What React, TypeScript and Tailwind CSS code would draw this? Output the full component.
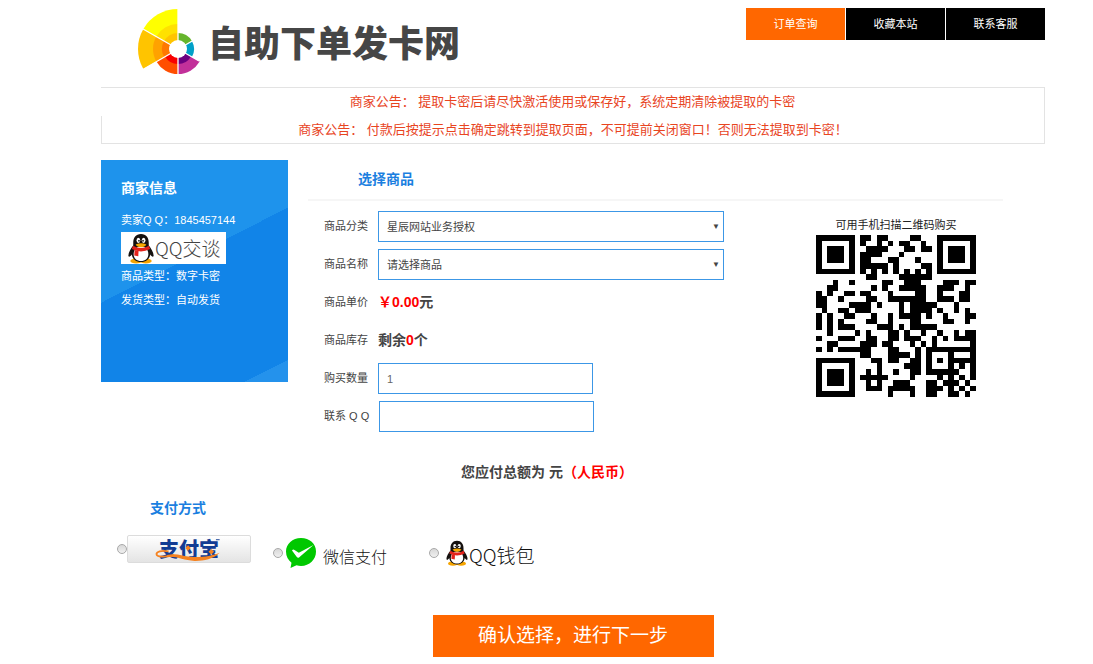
import { useState } from 'react';
import type { ReactNode } from 'react';

const NAV_ITEMS = [
  { label: '订单查询', active: true },
  { label: '收藏本站', active: false },
  { label: '联系客服', active: false },
];

const QR_ROWS = [
  '#######.##.##....##...#######',
  '#.....#.#..#.#.##..#..#.....#',
  '#.###.#..####...##.##.#.###.#',
  '#.###.#.####...#......#.###.#',
  '#.###.#.##...##...#...#.###.#',
  '#.....#.#####.#....##.#.....#',
  '#######.#.#.#.#.#.#.#.#######',
  '.........##....######........',
  '...#..#.....##..###....###.##',
  '..##......#.#..#####..###..#.',
  '#.#..##.##...#....##..#...##.',
  '##..#....##..#######..###.##.',
  '##....####.#...#.#####...#...',
  '.#..##.###.....#.####.#..#.#.',
  '#.#..##...#..#.####.#..#...##',
  '#.#.#....##..#...##....##..#.',
  '#.#.###....###.#.#####.......',
  '..#....#.#...##.#..#..#..#.##',
  '#...###..##..##.###..#.#.####',
  '..##....###.##...#.#.#......#',
  '#.#.######...##...#.#########',
  '........##...####.#.#...#...#',
  '#######...##.##..##.#.#.#####',
  '#.....#....#....###.#...#.#.#',
  '#.###.#..#.#..#..##.######..#',
  '#.###.#.#####....#....#.#.#.#',
  '#.###.#..#.#..###...##.###.#.',
  '#.....#..###.#####..###.#.#.#',
  '#######......#...#..##..##.#.',
];

function QrCode() {
  return (
    <svg
      viewBox="0 0 29 29"
      preserveAspectRatio="none"
      shapeRendering="crispEdges"
      className="h-[162px] w-40"
      role="img"
      aria-label="二维码"
    >
      {QR_ROWS.map((row, y) =>
        row.split('').map((c, x) =>
          c === '#' ? <rect key={`${x}-${y}`} x={x} y={y} width="1" height="1" /> : null,
        ),
      )}
    </svg>
  );
}

/** 从圆心出发的扇形，角度以正上方为 0，顺时针 */
function wedge(r: number, from: number, to: number) {
  const point = (deg: number) => {
    const a = ((deg - 90) * Math.PI) / 180;
    return `${(41 + r * Math.cos(a)).toFixed(2)} ${(41 + r * Math.sin(a)).toFixed(2)}`;
  };
  return `M41 41 L${point(from)} A${r} ${r} 0 0 1 ${point(to)} Z`;
}

const WEDGES: [number, number, number, string][] = [
  [40, 300, 360, '#ffff00'],
  [25, 300, 360, '#ffe100'],
  [16, 300, 360, '#ffc400'],
  [40, 240, 300, '#ffc400'],
  [25, 240, 300, '#ffa200'],
  [16, 240, 300, '#ff7800'],
  [25, 180, 240, '#ff4e00'],
  [15, 180, 240, '#f80000'],
  [25, 120, 180, '#c2309a'],
  [15, 120, 180, '#6c0080'],
  [16, 60, 120, '#00a0c8'],
  [16, 0, 60, '#66b52c'],
];

function Logo() {
  return (
    <svg viewBox="0 0 64 67" className="h-[67px] w-16" aria-hidden="true">
      {WEDGES.map(([r, from, to, fill]) => (
        <path key={`${r}-${from}`} d={wedge(r, from, to)} fill={fill} />
      ))}
      <path
        d="M41 0V67 M6 21L62 53 M5 62L57 32"
        stroke="#fff"
        strokeWidth="1.3"
        fill="none"
      />
      <circle cx="41" cy="41" r="9" fill="#fff" />
    </svg>
  );
}

function Penguin({ className }: { className: string }) {
  return (
    <svg viewBox="0 0 28 32" className={className} aria-hidden="true">
      <ellipse cx="9" cy="29" rx="6" ry="2.6" fill="#f5a400" />
      <ellipse cx="19" cy="29" rx="6" ry="2.6" fill="#f5a400" />
      <path
        d="M14 1C8.6 1 6 5 6 10v3C3.500 16 .8 20.500 1 23.500c.2 2 2.200.7 3.500-1.300C5.200 27 9 30 14 30s8.800-3 9.500-7.800c1.300 2 3.300 3.300 3.500 1.300.2-3-2.500-7.500-5-10.500v-3C22 5 19.400 1 14 1Z"
        fill="#15110f"
      />
      <path
        d="M14 14c-5 0-7.600 3.500-7.600 8 0 4.200 3.200 7 7.600 7s7.600-2.800 7.600-7c0-4.500-2.600-8-7.600-8Z"
        fill="#fff"
      />
      <ellipse cx="11.300" cy="7.500" rx="1.900" ry="2.700" fill="#fff" />
      <ellipse cx="16.700" cy="7.500" rx="1.900" ry="2.700" fill="#fff" />
      <circle cx="11.900" cy="8" r=".9" />
      <circle cx="16.100" cy="8" r=".9" />
      <path d="M8.500 11.800Q14 9.200 19.500 11.800Q18 14.600 14 14.600Q10 14.600 8.500 11.800Z" fill="#f7a800" />
      <path d="M5.800 13.200Q14 17.800 22.200 13.200L23.400 16.500Q14 21.500 4.600 16.500Z" fill="#e3231b" />
      <path d="M7.500 17.500l4 1.200-.3 5.200-4.200-.8Z" fill="#e3231b" />
    </svg>
  );
}

function WechatPayIcon() {
  return (
    <svg viewBox="0 0 32 32" className="size-8" aria-hidden="true">
      <path
        d="M16 1C7.500 1 1 7 1 14.500c0 5 2.200 8.500 5.500 11.200L5.500 31l6-2.800c1.500.5 3 .8 4.500.8 8.500 0 15-6.500 15-14.500S24.500 1 16 1Z"
        fill="#00c800"
      />
      <path d="M7 13.500q1-1.500 2.500-.5l4.300 2.800L28.500 8 14 20.500q-1.200.9-2.200-.4Z" fill="#fff" />
    </svg>
  );
}

function AlipayBadge() {
  return (
    <span className="relative flex h-7 w-[124px] items-center justify-center rounded-xs border border-[#dcdcdc] bg-linear-to-b from-white to-[#e4e4e4]">
      <span className="pt-0.5 text-[20px] leading-none font-black text-[#123c93]">支付宝</span>
      <svg viewBox="0 0 124 28" className="absolute inset-0 size-full" aria-hidden="true">
        <path
          d="M40 16.500C32 15 27 17 27 19.500 27 23 36 23 46 20.500"
          fill="none"
          stroke="#f58220"
          strokeWidth="2"
        />
        <path d="M38 20.500C48 18 54 21 61 22 72 23.500 86 22 95 18 88 25 77 27 68 26.800 56 26.500 50 21.500 38 22.500Z" fill="#f58220" />
        <path d="M61 10l3 3-3 3-3-3Z M86 14l3 3-3 3-3-3Z" fill="#f58220" />
        <path d="M91 4h4" stroke="#123c93" />
      </svg>
    </span>
  );
}

function Field({ id, label, children }: { id?: string; label: string; children: ReactNode }) {
  const text = 'shrink-0 text-[11px]';
  return (
    <div className="flex h-[30px] items-center gap-2.5">
      {id ? (
        <label htmlFor={id} className={text}>
          {label}
        </label>
      ) : (
        <span className={text}>{label}</span>
      )}
      {children}
    </div>
  );
}

function SelectBox({ id, option }: { id: string; option: string }) {
  return (
    <div className="relative w-[346px]">
      <select
        id={id}
        className="block h-[31px] w-full appearance-none border border-[#3c97e6] bg-white px-2 pt-0.5 text-[11px] outline-none"
      >
        <option>{option}</option>
      </select>
      <span className="pointer-events-none absolute top-2.5 right-1 text-[8px] leading-3">▼</span>
    </div>
  );
}

function PayOption({
  value,
  selected,
  onSelect,
  children,
}: {
  value: string;
  selected: string;
  onSelect: (value: string) => void;
  children: ReactNode;
}) {
  return (
    <label className="flex w-[156px] items-center">
      <input
        type="radio"
        name="pay"
        value={value}
        checked={selected === value}
        onChange={() => onSelect(value)}
        className="size-2.5 shrink-0 appearance-none rounded-full border border-[#a8a8a8] bg-linear-to-b from-[#d8d8d8] to-[#f0f0f0] checked:border-[#555] checked:from-[#555] checked:to-[#555]"
      />
      {children}
    </label>
  );
}

export default function App() {
  const [quantity, setQuantity] = useState('1');
  const [contact, setContact] = useState('');
  const [pay, setPay] = useState('');

  return (
    <div className="bg-white pt-2 pr-12 pb-2 pl-[101px] font-['Liberation_Sans','Noto_Sans_CJK_SC',sans-serif] text-[#444]">
      <header className="flex items-start justify-between">
        <h1 className="flex items-center gap-[7px] pl-9 text-[36px] leading-none font-black text-[#464646]">
          <Logo />
          <span className="pt-1.5">自助下单发卡网</span>
        </h1>
        <nav className="flex gap-px">
          {NAV_ITEMS.map((item) => (
            <a
              key={item.label}
              href="#"
              className={`flex h-8 w-[99px] items-center justify-center text-[11px] text-white ${
                item.active ? 'bg-[#ff6700]' : 'bg-black'
              }`}
            >
              {item.label}
            </a>
          ))}
        </nav>
      </header>

      <div className="mt-3 text-center text-[13px] text-[#e8451f]">
        <p className="border-t border-r border-[#e3e3e3] leading-[28px]">
          商家公告： 提取卡密后请尽快激活使用或保存好，系统定期清除被提取的卡密
        </p>
        <p className="border-x border-b border-[#e3e3e3] leading-[27px]">
          商家公告： 付款后按提示点击确定跳转到提取页面，不可提前关闭窗口！否则无法提取到卡密！
        </p>
      </div>

      <main>
        <div className="mt-4 flex items-start gap-5">
          <aside className="h-[222px] w-[187px] shrink-0 bg-[linear-gradient(153deg,#1e93ec_45%,#1184e8_45%,#1184e8_93%,#2492ec_93%)] px-5 pt-4 text-[11px] text-white">
            <h2 className="text-[14px] leading-6 font-bold">商家信息</h2>
            <p className="mt-2 leading-6">卖家Q Q：1845457144</p>
            <a
              href="#"
              className="flex h-8 w-[105px] items-center bg-white pl-1.5 font-['Noto_Sans_CJK_SC',sans-serif] text-[19px] font-light text-[#444]"
            >
              <Penguin className="h-[31px] w-7 shrink-0" />
              QQ交谈
            </a>
            <p className="leading-6">商品类型：数字卡密</p>
            <p className="leading-6">发货类型：自动发货</p>
          </aside>

          <section className="mr-[42px] grow">
            <h2 className="border-b-2 border-[#f6f6f6] pl-[50px] text-[14px] leading-[39px] font-bold text-[#1b7fe0]">
              选择商品
            </h2>
            <div className="flex items-start justify-between pt-2.5 pr-[27px] pl-4">
              <form className="flex flex-col gap-2">
                <Field id="category" label="商品分类">
                  <SelectBox id="category" option="星辰网站业务授权" />
                </Field>
                <Field id="product" label="商品名称">
                  <SelectBox id="product" option="请选择商品" />
                </Field>
                <Field label="商品单价">
                  <strong className="text-[14px]">
                    <span className="text-[#f00]">￥0.00</span>元
                  </strong>
                </Field>
                <Field label="商品库存">
                  <strong className="text-[14px]">
                    剩余<span className="text-[#f00]">0</span>个
                  </strong>
                </Field>
                <Field id="quantity" label="购买数量">
                  <input
                    id="quantity"
                    value={quantity}
                    onChange={(e) => setQuantity(e.target.value)}
                    className="h-[31px] w-[215px] border border-[#3c97e6] px-2 pt-0.5 text-[11px] text-[#666] outline-none"
                  />
                </Field>
                <Field id="contact" label="联系 Q Q">
                  <input
                    id="contact"
                    value={contact}
                    onChange={(e) => setContact(e.target.value)}
                    className="h-[31px] w-[215px] border border-[#3c97e6] px-2 pt-0.5 text-[11px] text-[#666] outline-none"
                  />
                </Field>
              </form>
              <figure className="flex flex-col items-center pt-1">
                <figcaption className="text-[11px] leading-5 text-[#222]">可用手机扫描二维码购买</figcaption>
                <QrCode />
              </figure>
            </div>
          </section>
        </div>

        <p className="mt-[29px] pr-[52px] text-center text-[14px] leading-6 font-bold">
          您应付总额为 元<span className="text-[#f00]">（人民币）</span>
        </p>

        <h2 className="mt-3 pl-[49px] text-[14px] leading-6 font-bold text-[#1b7fe0]">支付方式</h2>
        <div className="mt-[15px] flex items-start pl-4">
          <PayOption value="alipay" selected={pay} onSelect={setPay}>
            <AlipayBadge />
          </PayOption>
          <PayOption value="wechat" selected={pay} onSelect={setPay}>
            <span className="flex h-9 items-center gap-1.5 pl-0.5 font-['Noto_Sans_CJK_SC',sans-serif] text-[16px] font-light text-[#111]">
              <WechatPayIcon />
              <span className="pt-1.5">微信支付</span>
            </span>
          </PayOption>
          <PayOption value="qq" selected={pay} onSelect={setPay}>
            <span className="flex h-9 items-center pl-1.5 font-['Noto_Sans_CJK_SC',sans-serif] text-[19px] font-light text-[#111]">
              <Penguin className="h-[26px] w-6 shrink-0" />
              <span className="pt-1">QQ钱包</span>
            </span>
          </PayOption>
        </div>

        <div className="mt-11 flex justify-center">
          <button type="submit" className="h-[42px] w-[281px] bg-[#ff6700] text-[19px] text-white">
            确认选择，进行下一步
          </button>
        </div>
      </main>
    </div>
  );
}
